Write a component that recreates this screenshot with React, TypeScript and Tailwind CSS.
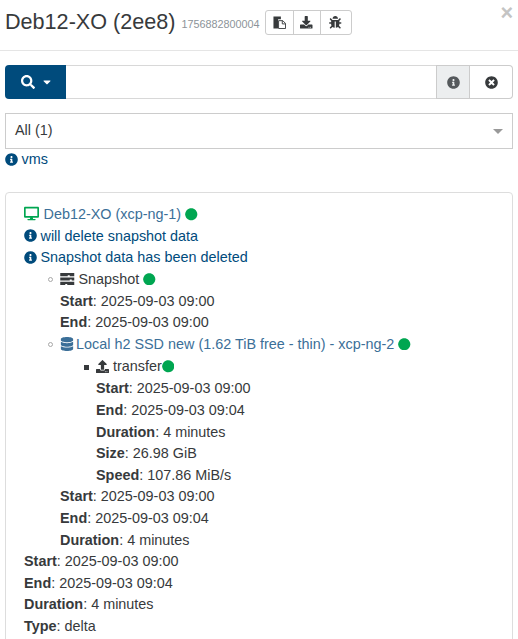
import React from "react";
import { FaSearch, FaInfoCircle, FaTimesCircle, FaBug, FaDownload, FaDesktop, FaDatabase, FaUpload, FaCircle, FaCaretDown } from "react-icons/fa";

const Dot = () => <FaCircle className="inline-block text-[#00a651] text-[12.5px] align-[-1.5px]" />;
const Kv = ({ k, v }: { k: string; v: string }) => (
  <div className="h-[21.6px]"><b className="font-bold">{k}</b>: {v}</div>
);
const Info = ({ children }: { children: React.ReactNode }) => (
  <div className="h-[21.6px] text-[#004b7c]"><FaInfoCircle className="inline-block text-[13px] align-[-1.5px] mr-[3.5px]" />{children}</div>
);
const CircleMark = () => (
  <span className="absolute left-[-12.5px] top-[8.5px] w-[5px] h-[5px] rounded-full border border-[#a8a8a8]" />
);
const PasteIcon = () => (
  <svg viewBox="0 0 14 14" className="w-[13px] h-[13px]">
    <path d="M0.5 0.5h8v3h-3v10h-5z" fill="#373a3c" />
    <path d="M6 5h4.5l3 3v5.5H6z" fill="#fff" stroke="#373a3c" strokeWidth="1" />
    <path d="M10 5v3.5h3.5" fill="none" stroke="#373a3c" strokeWidth="1" />
  </svg>
);
const TasksIcon = () => (
  <svg viewBox="0 0 14 12" className="inline-block w-[14.5px] h-[12px] align-[-1px] mr-[4px]">
    <path d="M0 0h14v3.2H9.5v-1h-2v1H0z" fill="#373a3c" />
    <path d="M0 4.4h14v3.2H11.5v-1h-2v1H0z" fill="#373a3c" />
    <path d="M0 8.8h14V12H7v-1H5v1H0z" fill="#373a3c" />
  </svg>
);

export default function App() {
  return (
    <div className="w-[518px] h-[639px] overflow-hidden bg-white text-[#373a3c] text-[14.4px] leading-[21.6px] font-['Liberation_Sans',sans-serif] relative">
      <div className="h-[51px] border-b border-[#e5e5e5] flex items-start pl-[5px] pt-[10px]">
        <span className="text-[21.6px] leading-[21.6px] mt-[1px]">Deb12-XO (2ee8)</span>
        <span className="text-[10.8px] text-[#8c9399] ml-[6px] mt-[6px] leading-[16px]">1756882800004</span>
        <div className="ml-[5px] flex h-[25px] border border-[#ccc] rounded-[3px] text-[#373a3c] text-[12.5px]">
          <span className="w-[28px] flex items-center justify-center border-r border-[#ccc]"><PasteIcon /></span>
          <span className="w-[27px] flex items-center justify-center border-r border-[#ccc]"><FaDownload /></span>
          <span className="w-[30px] flex items-center justify-center"><FaBug /></span>
        </div>
      </div>
      <span className="absolute right-[5px] top-[-1px] text-[#c4c4c4] text-[21.6px] font-bold leading-[27px]">×</span>

      <div className="mx-[5px] mt-[14px] h-[34px] flex">
        <div className="w-[61px] bg-[#004b7c] rounded-l-[4px] text-white flex items-center justify-center gap-[6px] pl-[2px] text-[14px]">
          <FaSearch /><FaCaretDown className="text-[12px]" />
        </div>
        <div className="flex-1 border-y border-[#d8d8d8]" />
        <div className="w-[34px] bg-[#eceeef] border border-[#ccc] flex items-center justify-center text-[#55595c] text-[13px]"><FaInfoCircle /></div>
        <div className="w-[43px] border-y border-r border-[#ccc] rounded-r-[4px] flex items-center justify-center text-[#373a3c] text-[13px]"><FaTimesCircle /></div>
      </div>

      <div className="mx-[5px] mt-[14px] h-[36px] border border-[#ccc] flex items-center justify-between pl-[9px] pr-[9px]">
        <span>All (1)</span>
        <span className="w-0 h-0 border-x-[5px] border-x-transparent border-t-[5px] border-t-[#999]" />
      </div>
      <div className="mx-[5px] h-[21.6px] text-[#004b7c]"><FaInfoCircle className="inline-block text-[13px] align-[-1.5px] mr-[3.5px]" />vms</div>

      <div className="mx-[5px] mt-[21px] border border-[#ddd] rounded-[4px] pt-[11.5px] pl-[18px] pr-[4px] pb-[10px]">
        <div className="h-[21.6px]">
          <FaDesktop className="inline-block text-[#00a651] text-[15px] align-[-2px] mr-[4.5px]" />
          <span className="text-[#3b6f98]">Deb12-XO (xcp-ng-1)</span> <Dot />
        </div>
        <Info>will delete snapshot data</Info>
        <Info>Snapshot data has been deleted</Info>
        <ul className="list-none pl-[36px]">
          <li className="relative">
            <CircleMark />
            <div className="h-[21.9px]"><TasksIcon />Snapshot <Dot /></div>
            <Kv k="Start" v="2025-09-03 09:00" />
            <Kv k="End" v="2025-09-03 09:00" />
          </li>
          <li className="relative">
            <CircleMark />
            <div className="h-[22.5px]">
              <FaDatabase className="inline-block text-[14px] text-[#3b6f98] align-[-2px] mr-[2px]" />
              <span className="text-[#3b6f98]">Local h2 SSD new (1.62 TiB free - thin) - xcp-ng-2</span> <Dot />
            </div>
            <ul className="list-none pl-[36px]">
              <li className="relative">
                <span className="absolute left-[-12px] top-[9px] w-[4.5px] h-[4.5px] bg-[#373a3c]" />
                <div className="h-[22px]"><FaUpload className="inline-block text-[13px] align-[-1.5px] mr-[4px]" />transfer<Dot /></div>
                <Kv k="Start" v="2025-09-03 09:00" />
                <Kv k="End" v="2025-09-03 09:04" />
                <Kv k="Duration" v="4 minutes" />
                <Kv k="Size" v="26.98 GiB" />
                <Kv k="Speed" v="107.86 MiB/s" />
              </li>
            </ul>
            <Kv k="Start" v="2025-09-03 09:00" />
            <Kv k="End" v="2025-09-03 09:04" />
            <Kv k="Duration" v="4 minutes" />
          </li>
        </ul>
        <Kv k="Start" v="2025-09-03 09:00" />
        <Kv k="End" v="2025-09-03 09:04" />
        <Kv k="Duration" v="4 minutes" />
        <Kv k="Type" v="delta" />
      </div>
    </div>
  );
}
